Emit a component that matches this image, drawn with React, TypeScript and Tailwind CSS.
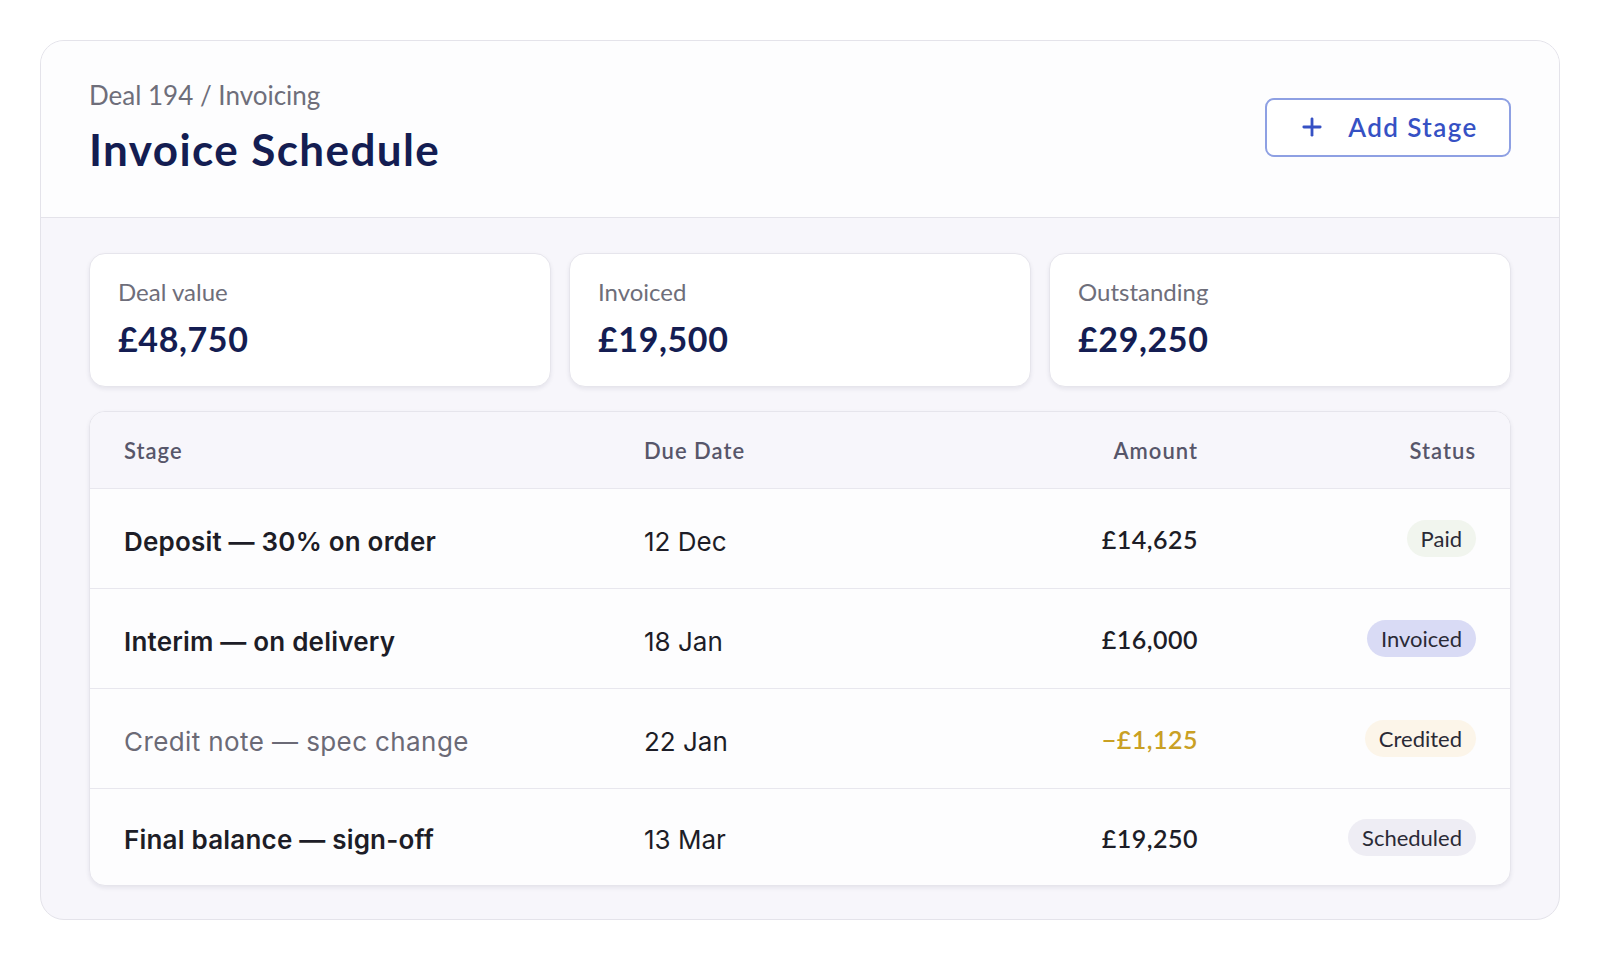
import { Plus } from "lucide-react";

const stats = [
  { label: "Deal value", value: "£48,750" },
  { label: "Invoiced", value: "£19,500" },
  { label: "Outstanding", value: "£29,250" },
];

type Row = {
  stage: string;
  due: string;
  amount: string;
  status: string;
  muted?: boolean;
  credit?: boolean;
  pill: string;
};

const rows: Row[] = [
  { stage: "Deposit — 30% on order", due: "12 Dec", amount: "£14,625", status: "Paid", pill: "bg-[#f1f5ee]" },
  { stage: "Interim — on delivery", due: "18 Jan", amount: "£16,000", status: "Invoiced", pill: "bg-[#d9dbf5]" },
  { stage: "Credit note — spec change", due: "22 Jan", amount: "−£1,125", status: "Credited", muted: true, credit: true, pill: "bg-[#fcf5e9]" },
  { stage: "Final balance — sign-off", due: "13 Mar", amount: "£19,250", status: "Scheduled", pill: "bg-[#eeedf4]" },
];

const App = () => {
  return (
    <div className="min-h-screen bg-white p-10 font-['Lato','Noto_Sans',sans-serif]">
      <div className="h-[880px] rounded-[24px] border border-[#e4e3ea] overflow-hidden bg-[#f7f6fb] flex flex-col">
        {/* header */}
        <div className="bg-[#fdfdfe] border-b border-[#e4e3ea] px-12 pt-[37px] pb-[41px] flex items-center justify-between">
          <div>
            <div className="text-[26px] leading-[34px] text-[#6e6e7a]">Deal 194 / Invoicing</div>
            <h1 className="mt-[11px] text-[44px] leading-[53px] font-bold tracking-[1.4px] text-[#141d52]">Invoice Schedule</h1>
          </div>
          <button className="h-[59px] w-[246px] rounded-[9px] border-2 border-[#8ea0e3] bg-white flex items-center justify-center gap-[22px] text-[#3651c4]">
            <Plus className="w-[28px] h-[28px]" strokeWidth={2.4} />
            <span className="text-[26px] font-semibold tracking-[1.4px]">Add Stage</span>
          </button>
        </div>

        {/* body */}
        <div className="flex-1 px-12 pt-[35px] flex flex-col gap-[24px]">
          <div className="grid grid-cols-3 gap-[18px]">
            {stats.map((s) => (
              <div
                key={s.label}
                className="h-[134px] rounded-[16px] border border-[#e6e5ec] bg-white shadow-[0_2px_4px_rgba(30,30,70,0.08)] px-[28px] pt-[23px]"
              >
                <div className="text-[24px] leading-[30px] text-[#6e6e7a]">{s.label}</div>
                <div className="mt-[11px] text-[34px] leading-[41px] font-bold tracking-[0.6px] text-[#141d52]">{s.value}</div>
              </div>
            ))}
          </div>

          <div className="rounded-[16px] border border-[#e6e5ec] bg-[#fdfdfe] shadow-[0_2px_4px_rgba(30,30,70,0.08)] overflow-hidden">
            <div className="h-[76px] bg-[#f7f6fb] px-[34px] flex items-center text-[22px] font-semibold tracking-[1px] text-[#57566a]">
              <div className="w-[520px]">Stage</div>
              <div className="w-[220px]">Due Date</div>
              <div className="flex-1 text-right">Amount</div>
              <div className="w-[278px] text-right">Status</div>
            </div>
            {rows.map((r) => (
              <div
                key={r.stage}
                className="h-[100px] last:h-[97px] border-t border-[#e8e7ee] px-[34px] flex items-center"
              >
                <div
                  className={
                    r.muted
                      ? "w-[520px] pt-[5px] font-['Inter',sans-serif] text-[26px] tracking-[0.4px] text-[#6b6a76]"
                      : "w-[520px] pt-[5px] font-['Inter',sans-serif] text-[26px] font-semibold tracking-[0.2px] text-[#1d1d27]"
                  }
                >
                  {r.stage}
                </div>
                <div className="w-[220px] pt-[5px] font-['Inter',sans-serif] text-[26px] text-[#1d1d27]">{r.due}</div>
                <div
                  className={
                    r.credit
                      ? "flex-1 pt-[3px] text-right text-[25px] font-semibold tracking-[0.5px] text-[#c9a024]"
                      : "flex-1 pt-[3px] text-right text-[25px] font-semibold tracking-[0.5px] text-[#1d1d27]"
                  }
                >
                  {r.amount}
                </div>
                <div className="w-[278px] flex justify-end">
                  <span className={`${r.pill} rounded-full h-[37px] px-[14px] flex items-center text-[22px] text-[#2a2a36]`}>{r.status}</span>
                </div>
              </div>
            ))}
          </div>
        </div>
      </div>
    </div>
  );
};

export default App;
